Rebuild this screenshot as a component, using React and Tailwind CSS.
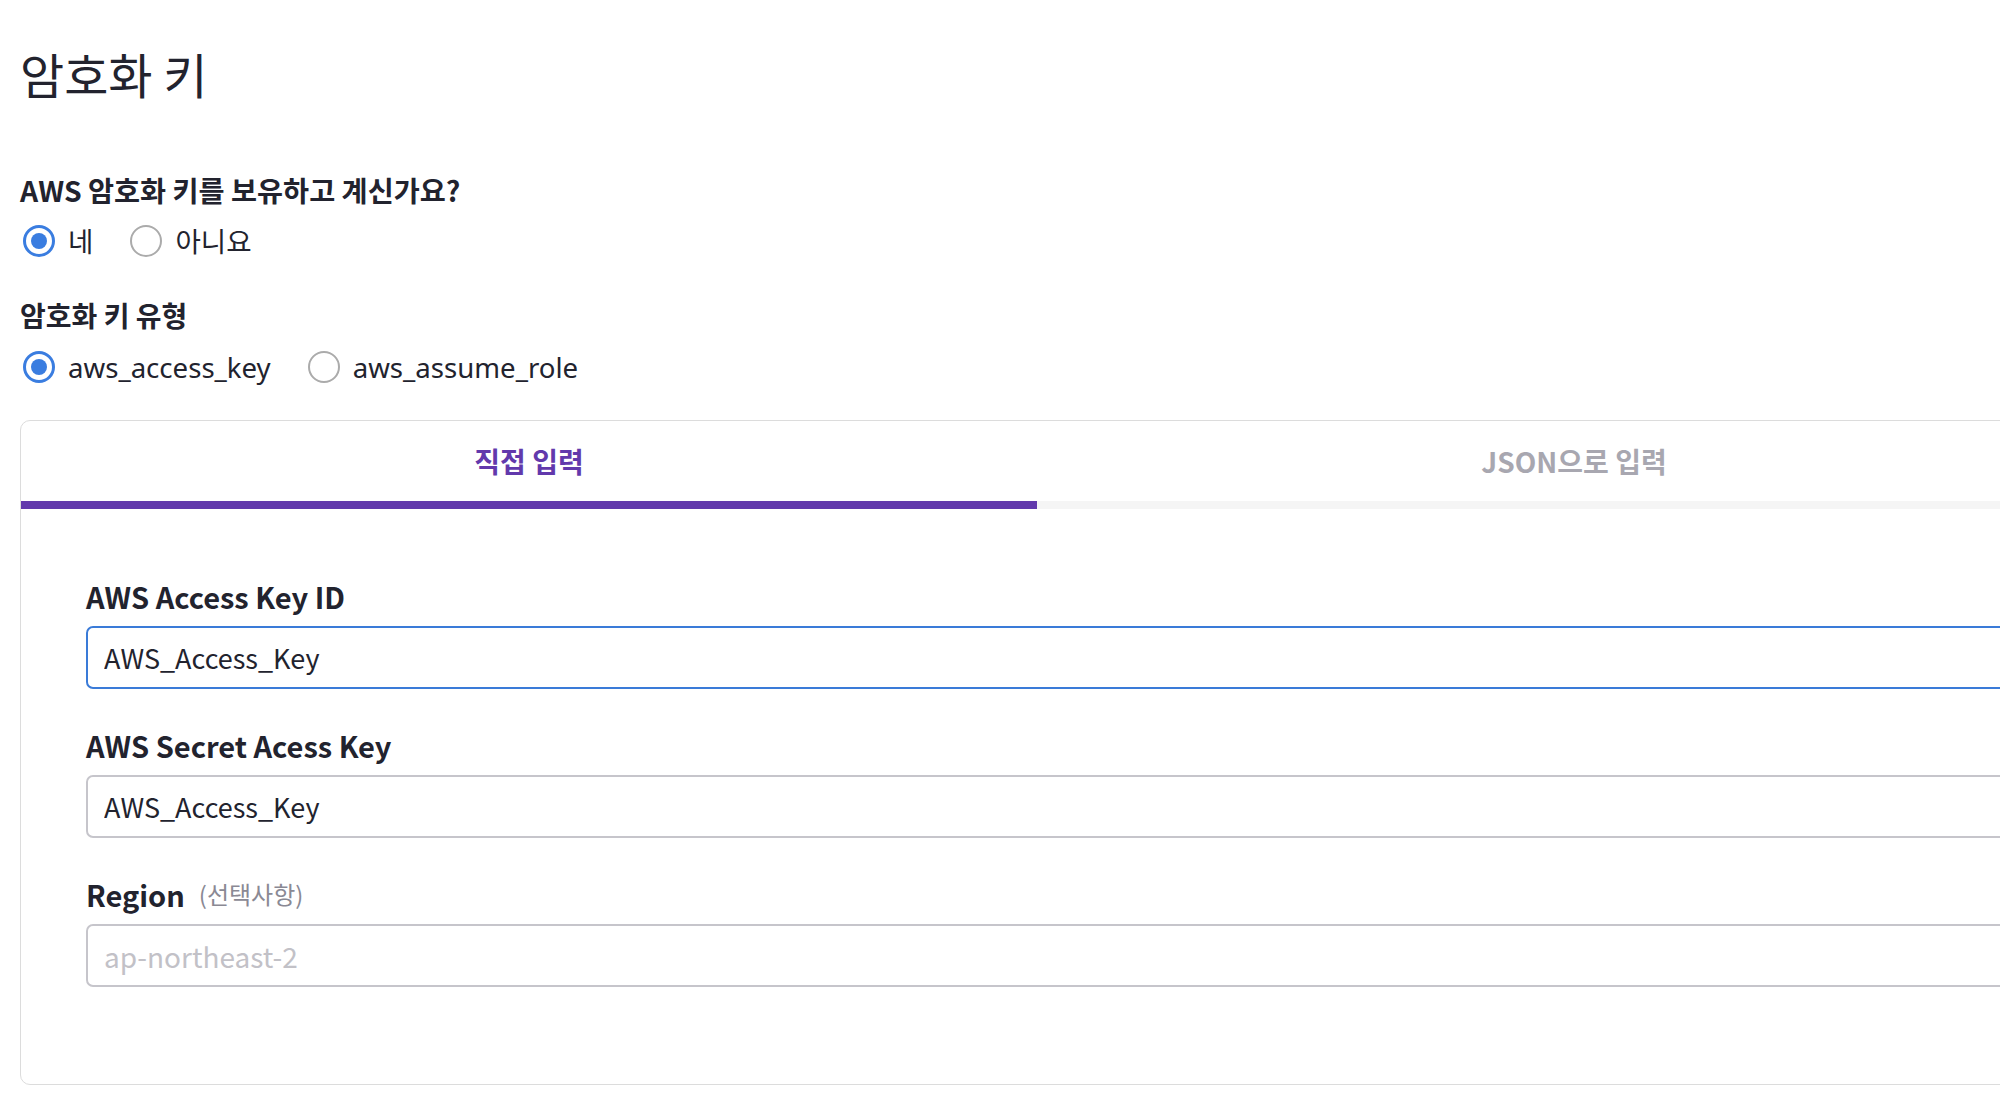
import React, { useState } from 'react';

const Radio = ({ checked, label, onClick }) => {
  return (
    <label onClick={onClick} className="flex items-center gap-[13px] cursor-pointer">
      {checked ? (
        <span className="ml-[3px] w-[32px] h-[32px] rounded-full border-[3px] border-[#3a7de0] flex items-center justify-center">
          <span className="w-[16px] h-[16px] rounded-full bg-[#3a7de0]" />
        </span>
      ) : (
        <span className="ml-[3px] w-[32px] h-[32px] rounded-full border-2 border-[#ababab] bg-white" />
      )}
      <span className="font-['Noto_Sans','Noto_Sans_CJK_KR',sans-serif] text-[27.6px] leading-[40px] text-[#22232e]">
        {label}
      </span>
    </label>
  );
};

const Field = ({ label, hint, value, placeholder, focused, size }) => {
  return (
    <div>
      <div className="flex items-center h-[40px] mb-[10px]">
        <span className="text-[29px] font-bold text-[#22232e] leading-[40px]">{label}</span>
        {hint && <span className="ml-[14px] text-[24px] text-[#8a8994] leading-[40px]">{hint}</span>}
      </div>
      <input
        defaultValue={value}
        placeholder={placeholder}
        className={`w-full h-[63px] rounded-[7px] border-2 pl-[16px] text-[#22232e] outline-none placeholder:text-[#c2c1c7] ${size} ${
          focused ? 'border-[#3a7bd8]' : 'border-[#c6c5cb]'
        }`}
      />
    </div>
  );
};

export default function App() {
  const [hasKey, setHasKey] = useState(true);
  const [keyType, setKeyType] = useState('access');
  const [tab, setTab] = useState(0);

  return (
    <div className="w-full min-h-screen overflow-hidden bg-white font-['Noto_Sans_CJK_KR','Noto_Sans',sans-serif] text-[#22232e]">
      <div className="pl-[20px] pt-[45px]">
        <h1 className="text-[48px] leading-[56px] font-normal">암호화 키</h1>

        <div className="mt-[71px] text-[28.3px] font-bold leading-[36px]">AWS 암호화 키를 보유하고 계신가요?</div>
        <div className="mt-[13px] flex items-center gap-[34px] h-[40px]">
          <Radio checked={hasKey} label="네" onClick={() => setHasKey(true)} />
          <Radio checked={!hasKey} label="아니요" onClick={() => setHasKey(false)} />
        </div>

        <div className="mt-[36px] text-[28px] font-bold leading-[36px]">암호화 키 유형</div>
        <div className="mt-[14px] flex items-center gap-[34px] h-[40px]">
          <Radio checked={keyType === 'access'} label="aws_access_key" onClick={() => setKeyType('access')} />
          <Radio checked={keyType === 'role'} label="aws_assume_role" onClick={() => setKeyType('role')} />
        </div>

        {/* card overflows past the right edge of the window */}
        <div className="mt-[33px] w-[2092px] rounded-[10px] border border-[#dcdcdc] bg-white">
          <div className="flex">
            <button
              onClick={() => setTab(0)}
              className="w-[1016px] flex flex-col"
            >
              <span
                className={`h-[80px] flex items-center justify-center text-[28px] font-bold ${
                  tab === 0 ? 'text-[#6239ac]' : 'text-[#a8a7b0]'
                }`}
              >
                직접 입력
              </span>
              <span className={`h-[8px] w-full ${tab === 0 ? 'bg-[#6239ac]' : 'bg-[#f5f5f5]'}`} />
            </button>
            <button
              onClick={() => setTab(1)}
              className="w-[1074px] flex flex-col"
            >
              <span
                className={`h-[80px] flex items-center justify-center text-[28px] font-bold ${
                  tab === 1 ? 'text-[#6239ac]' : 'text-[#a8a7b0]'
                }`}
              >
                JSON으로 입력
              </span>
              <span className={`h-[8px] w-full ${tab === 1 ? 'bg-[#6239ac]' : 'bg-[#f5f5f5]'}`} />
            </button>
          </div>

          <div className="pl-[65px] pt-[67px] pb-[97px] flex flex-col gap-[36px]">
            <Field label="AWS Access Key ID" value="AWS_Access_Key" size="text-[27px]" focused />
            <Field label="AWS Secret Acess Key" value="AWS_Access_Key" size="text-[27px]" />
            <Field label="Region" hint="(선택사항)" placeholder="ap-northeast-2" size="text-[28px]" />
          </div>
        </div>
      </div>
    </div>
  );
}
